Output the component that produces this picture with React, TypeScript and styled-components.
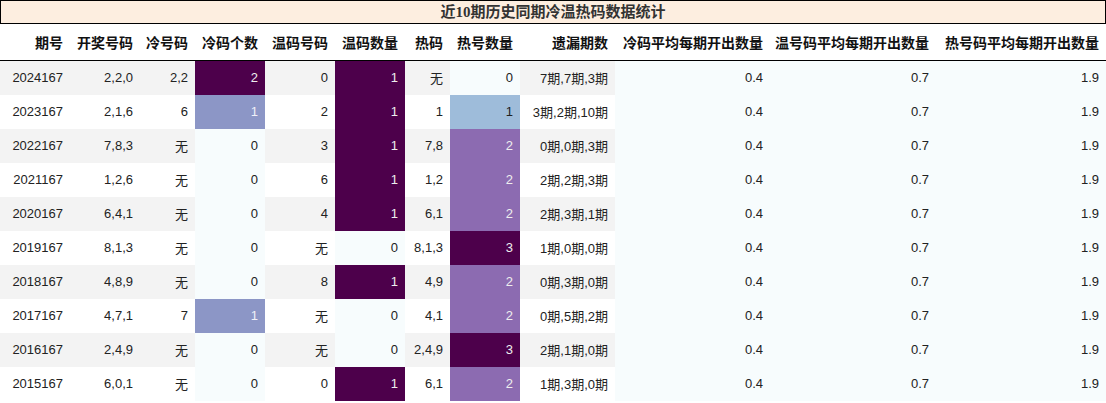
import React from 'react';
import styled, { createGlobalStyle } from 'styled-components';

const GlobalStyle = createGlobalStyle`
  html, body { margin: 0; padding: 0; background: #fff; }
  body { font-family: "Liberation Sans", "Noto Sans CJK SC", sans-serif; }
`;

const Wrap = styled.div`
  width: 1106px;
`;

const Title = styled.div`
  height: 24px;
  box-sizing: border-box;
  border: 1px solid #000;
  background: #fdeee0;
  color: #333;
  font-family: "Liberation Serif", "Noto Sans CJK SC", serif;
  font-weight: bold;
  font-size: 15px;
  line-height: 22px;
  text-align: center;
`;

const Table = styled.table`
  width: 1106px;
  border-collapse: collapse;
  table-layout: fixed;
  font-size: 13px;
  color: #222;
`;

const Th = styled.th`
  height: 36px;
  padding: 0 7px 0 0;
  text-align: right;
  font-size: 14px;
  font-weight: bold;
  font-family: "Noto Sans CJK SC", sans-serif;
  color: #111;
  border-bottom: 1.5px solid #000;
  white-space: nowrap;
`;

const Tr = styled.tr<{ $odd: boolean }>`
  height: 34px;
  background: ${({ $odd }) => ($odd ? '#f3f3f3' : '#fff')};
`;

const Td = styled.td<{ $bg?: string; $fg?: string }>`
  padding: 0 7px 0 0;
  text-align: right;
  white-space: nowrap;
  background: ${({ $bg }) => $bg ?? 'transparent'};
  color: ${({ $fg }) => $fg ?? '#222'};
  font-family: "Liberation Sans", "Noto Sans CJK SC", sans-serif;
`;

const widths = [70, 70, 55, 70, 70, 70, 45, 70, 95, 155, 166, 170];
const heads = ['期号', '开奖号码', '冷号码', '冷码个数', '温码号码', '温码数量', '热码', '热号数量', '遗漏期数', '冷码平均每期开出数量', '温号码平均每期开出数量', '热号码平均每期开出数量'];

const scale: Record<string, [string, string]> = {
  '0': ['#f7fcfd', '#222'],
  '1': ['#8c96c6', '#f0f0f8'],
  '2': ['#4d004b', '#eee'],
  '3': ['#4d004b', '#eee'],
};
const warmScale: Record<string, [string, string]> = {
  '0': ['#f7fcfd', '#222'],
  '1': ['#4d004b', '#eee'],
};
const hotScale: Record<string, [string, string]> = {
  '0': ['#f7fcfd', '#222'],
  '1': ['#9ebcda', '#222'],
  '2': ['#8c6bb1', '#eee'],
  '3': ['#4d004b', '#eee'],
};

const rows = [
  ['2024167', '2,2,0', '2,2', '2', '0', '1', '无', '0', '7期,7期,3期'],
  ['2023167', '2,1,6', '6', '1', '2', '1', '1', '1', '3期,2期,10期'],
  ['2022167', '7,8,3', '无', '0', '3', '1', '7,8', '2', '0期,0期,3期'],
  ['2021167', '1,2,6', '无', '0', '6', '1', '1,2', '2', '2期,2期,3期'],
  ['2020167', '6,4,1', '无', '0', '4', '1', '6,1', '2', '2期,3期,1期'],
  ['2019167', '8,1,3', '无', '0', '无', '0', '8,1,3', '3', '1期,0期,0期'],
  ['2018167', '4,8,9', '无', '0', '8', '1', '4,9', '2', '0期,3期,0期'],
  ['2017167', '4,7,1', '7', '1', '无', '0', '4,1', '2', '0期,5期,2期'],
  ['2016167', '2,4,9', '无', '0', '无', '0', '2,4,9', '3', '2期,1期,0期'],
  ['2015167', '6,0,1', '无', '0', '0', '1', '6,1', '2', '1期,3期,0期'],
];

export default function App() {
  return (
    <Wrap>
      <GlobalStyle />
      <Title>近10期历史同期冷温热码数据统计</Title>
      <Table>
        <colgroup>
          {widths.map((w, i) => (
            <col key={i} style={{ width: w }} />
          ))}
        </colgroup>
        <thead>
          <tr>
            {heads.map((h) => (
              <Th key={h}>{h}</Th>
            ))}
          </tr>
        </thead>
        <tbody>
          {rows.map((r, i) => (
            <Tr key={r[0]} $odd={i % 2 === 0}>
              <Td>{r[0]}</Td>
              <Td>{r[1]}</Td>
              <Td>{r[2]}</Td>
              <Td $bg={scale[r[3]][0]} $fg={scale[r[3]][1]}>{r[3]}</Td>
              <Td>{r[4]}</Td>
              <Td $bg={warmScale[r[5]][0]} $fg={warmScale[r[5]][1]}>{r[5]}</Td>
              <Td>{r[6]}</Td>
              <Td $bg={hotScale[r[7]][0]} $fg={hotScale[r[7]][1]}>{r[7]}</Td>
              <Td>{r[8]}</Td>
              <Td $bg="#f7fcfd">0.4</Td>
              <Td $bg="#f7fcfd">0.7</Td>
              <Td $bg="#f7fcfd">1.9</Td>
            </Tr>
          ))}
        </tbody>
      </Table>
    </Wrap>
  );
}
